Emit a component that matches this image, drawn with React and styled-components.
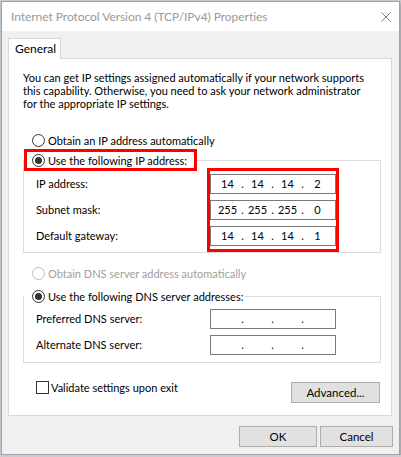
import styled, { createGlobalStyle } from "styled-components";

const GlobalStyle = createGlobalStyle`
  body {
    margin: 0;
    background: #c9ccd0;
    font-family: Lato, "Noto Sans", sans-serif;
    font-size: 11px;
    color: #000;
  }
`;

const ipRows = [
  { id: 1, label: "IP address:", value: ["14", "14", "14", "2"] },
  { id: 2, label: "Subnet mask:", value: ["255", "255", "255", "0"] },
  { id: 3, label: "Default gateway:", value: ["14", "14", "14", "1"] },
];

const dnsRows = [
  { id: 1, label: "Preferred DNS server:", value: ["", "", "", ""] },
  { id: 2, label: "Alternate DNS server:", value: ["", "", "", ""] },
];

function IpField({ value }) {
  return (
    <IpBox>
      {value.map((part, i) => (
        <IpGroup key={i}>
          <Octet>{part}</Octet>
          {i < 3 && <Dot>.</Dot>}
        </IpGroup>
      ))}
    </IpBox>
  );
}

function Radio({ checked, disabled, children }) {
  return (
    <RadioRow disabled={disabled}>
      <RadioCircle checked={checked} disabled={disabled} />
      <span>{children}</span>
    </RadioRow>
  );
}

export default function App() {
  return (
    <>
      <GlobalStyle />
      <Window>
        <TitleBar>
          <Title>Internet Protocol Version 4 (TCP/IPv4) Properties</Title>
          <svg width="10" height="10" viewBox="0 0 10 10">
            <path d="M0.5 0.5 L9.5 9.5 M9.5 0.5 L0.5 9.5" stroke="#7a7a7a" strokeWidth="1" />
          </svg>
        </TitleBar>
        <Body>
          <Tabs>
            <Tab>General</Tab>
          </Tabs>
          <Panel>
            <Intro>
              You can get IP settings assigned automatically if your network supports
              <br />
              this capability. Otherwise, you need to ask your network administrator
              <br />
              for the appropriate IP settings.
            </Intro>

            <Spaced top={24}>
              <Radio>Obtain an IP address automatically</Radio>
            </Spaced>

            <Group top={2}>
              <Legend marked>
                <Radio checked>Use the following IP address:</Radio>
              </Legend>
              <StaticGrid>
                <LabelColumn>
                  {ipRows.map((row) => (
                    <FieldLabel key={row.id}>{row.label}</FieldLabel>
                  ))}
                </LabelColumn>
                <Marked>
                  {ipRows.map((row) => (
                    <IpField key={row.id} value={row.value} />
                  ))}
                </Marked>
              </StaticGrid>
            </Group>

            <Spaced top={14}>
              <Radio disabled>Obtain DNS server address automatically</Radio>
            </Spaced>

            <Group top={8}>
              <Legend>
                <Radio checked>Use the following DNS server addresses:</Radio>
              </Legend>
              <DnsGrid>
                {dnsRows.map((row) => (
                  <DnsRow key={row.id}>
                    <FieldLabel>{row.label}</FieldLabel>
                    <IpField value={row.value} />
                  </DnsRow>
                ))}
              </DnsGrid>
            </Group>

            <BottomRow>
              <CheckRow>
                <CheckBox />
                <span>Validate settings upon exit</span>
              </CheckRow>
              <Button width={89} style={{ marginTop: 1, marginRight: 1 }}>
                Advanced...
              </Button>
            </BottomRow>
          </Panel>
          <Footer>
            <Button width={78}>OK</Button>
            <Button width={73}>Cancel</Button>
          </Footer>
        </Body>
      </Window>
    </>
  );
}

// style
const Window = styled.div`
  margin: 1px 0 0 1px;
  width: 399px;
  height: 454px;
  box-sizing: border-box;
  border: 1px solid #a3a3a3;
  background: #f0f0f0;
  box-shadow: 1px 2px 3px rgba(0, 0, 0, 0.25);
  display: flex;
  flex-direction: column;
`;

const TitleBar = styled.div`
  height: 29px;
  background: #fff;
  display: flex;
  align-items: center;
  justify-content: space-between;
  padding: 0 8px 0 9px;

  svg {
    display: block;
  }
`;

const Title = styled.div`
  color: #999;
  font-size: 12px;
  letter-spacing: -0.05px;
`;

const Body = styled.div`
  padding: 7px 7px 0 6px;
  display: flex;
  flex-direction: column;
`;

const Tabs = styled.div`
  display: flex;
`;

const Tab = styled.div`
  position: relative;
  z-index: 1;
  width: 53px;
  height: 21px;
  box-sizing: border-box;
  border: 1px solid #d9d9d9;
  border-bottom: none;
  background: #fff;
  padding-left: 6px;
  line-height: 19px;
  font-size: 12px;
`;

const Panel = styled.div`
  margin-top: -1px;
  height: 358px;
  box-sizing: border-box;
  border: 1px solid #d9d9d9;
  background: #fff;
  padding: 12px 10px 0 14px;
  display: flex;
  flex-direction: column;
`;

const Intro = styled.p`
  margin: 0;
  line-height: 13px;
  white-space: nowrap;
`;

const Spaced = styled.div`
  margin-top: ${(p) => p.top}px;
`;

const RadioRow = styled.label`
  display: flex;
  align-items: center;
  gap: 3px;
  height: 13px;
  padding-left: 9px;
  white-space: nowrap;
  color: ${(p) => (p.disabled ? "#a0a0a0" : "#000")};
`;

const RadioCircle = styled.span`
  position: relative;
  width: 13px;
  height: 13px;
  box-sizing: border-box;
  border-radius: 50%;
  border: 1px solid ${(p) => (p.disabled ? "#bcbcbc" : "#333")};
  background: #fff;
  flex: none;

  &::after {
    content: "";
    display: ${(p) => (p.checked ? "block" : "none")};
    position: absolute;
    left: 2px;
    top: 2px;
    width: 7px;
    height: 7px;
    border-radius: 50%;
    background: #333;
  }
`;

const Group = styled.fieldset`
  margin: ${(p) => p.top}px 0 0;
  padding: 0;
  min-width: 0;
  width: 358px;
  box-sizing: border-box;
  border: 1px solid #dcdcdc;
`;

const Legend = styled.legend`
  margin: 0;
  padding: ${(p) => (p.marked ? "0 7px 0 0" : "0 1px 0 0")};
  border: ${(p) => (p.marked ? "3px solid #f00" : "none")};
  height: 16px;
  display: flex;
  align-items: center;

  label {
    padding-left: ${(p) => (p.marked ? "5px" : "8px")};
  }
`;

const StaticGrid = styled.div`
  display: grid;
  grid-template-columns: 171px auto;
  padding-left: 12px;
  margin-top: -3px;
`;

const LabelColumn = styled.div`
  display: flex;
  flex-direction: column;
  gap: 6px;
  padding-top: 6px;
`;

const FieldLabel = styled.div`
  height: 20px;
  line-height: 20px;
  white-space: nowrap;
`;

const Marked = styled.div`
  justify-self: start;
  display: flex;
  flex-direction: column;
  gap: 6px;
  padding: 3px 0;
  border: 3px solid #f00;
`;

const DnsGrid = styled.div`
  display: flex;
  flex-direction: column;
  gap: 6px;
  padding: 5px 0 7px 12px;
`;

const DnsRow = styled.div`
  display: grid;
  grid-template-columns: 174px 126px;
`;

const IpBox = styled.div`
  width: 126px;
  height: 20px;
  box-sizing: border-box;
  border: 1px solid #7a7a7a;
  background: #fff;
  display: flex;
  padding-left: 3px;
  line-height: 18px;
  font-size: 11px;
`;

const IpGroup = styled.div`
  display: flex;
`;

const Octet = styled.span`
  width: 27px;
  text-align: center;
`;

const Dot = styled.span`
  width: 3px;
  display: flex;
  justify-content: center;
`;

const BottomRow = styled.div`
  margin-top: 18px;
  display: flex;
  justify-content: space-between;
  align-items: flex-start;
`;

const CheckRow = styled.label`
  display: flex;
  align-items: center;
  gap: 2px;
  height: 13px;
  padding-left: 13px;
`;

const CheckBox = styled.span`
  width: 13px;
  height: 13px;
  box-sizing: border-box;
  border: 1px solid #333;
  background: #fff;
`;

const Button = styled.button`
  width: ${(p) => p.width}px;
  height: 21px;
  box-sizing: border-box;
  border: 1px solid #adadad;
  background: #e1e1e1;
  font-family: inherit;
  font-size: 11.5px;
  color: #000;
  padding: 0;
`;

const Footer = styled.div`
  margin: 10px -1px 0 0;
  display: flex;
  justify-content: flex-end;
  gap: 3px;
`;
